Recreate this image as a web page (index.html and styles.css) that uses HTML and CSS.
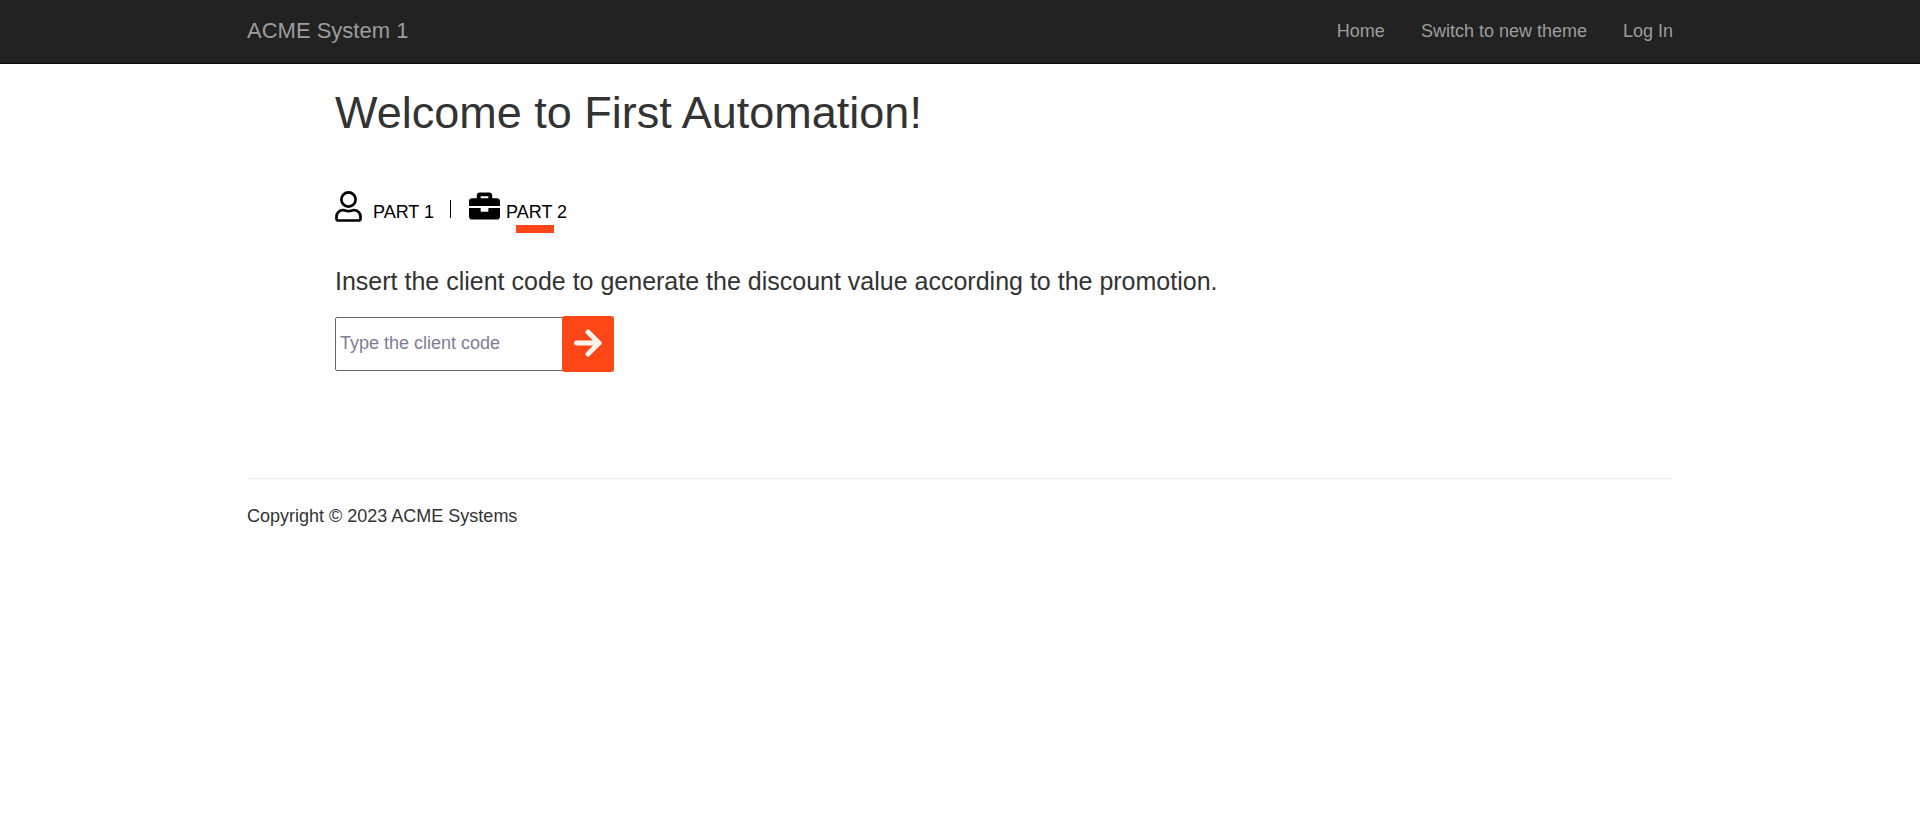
FILE: index.html
```html
<!DOCTYPE html>
<html lang="en">
<head>
<meta charset="utf-8">
<meta name="viewport" content="width=device-width, initial-scale=1">
<title>ACME System 1</title>
<link rel="stylesheet" href="styles.css">
</head>
<body>
<header class="navbar">
  <div class="container navbar-inner">
    <a class="brand" href="#">ACME System 1</a>
    <nav class="nav">
      <a href="#">Home</a>
      <a href="#">Switch to new theme</a>
      <a href="#">Log In</a>
    </nav>
  </div>
</header>
<div class="container">
  <main class="content">
    <h1 class="title">Welcome to First Automation!</h1>
    <nav class="parts">
      <a class="part part-one" href="#">
        <svg class="icon-user" viewBox="0 0 27 31" aria-hidden="true"><g fill="none" stroke="#000" stroke-width="2.700"><circle cx="13.500" cy="8.500" r="7.100"/><path d="M8.200 19.200C4.500 19.200 1.500 22 1.500 25.700V27.500C1.500 28.700 2.300 29.500 3.500 29.500H23.500C24.700 29.500 25.500 28.700 25.500 27.500V25.700C25.500 22 22.500 19.200 18.800 19.200C17.300 19.200 16.300 20.100 13.500 20.100S9.700 19.200 8.200 19.200Z"/></g></svg>
        <span class="label">PART 1</span>
      </a>
      <span class="divider"></span>
      <a class="part part-two" href="#">
        <svg class="icon-case" viewBox="0 0 512 512" aria-hidden="true"><path d="M320 336c0 8.840-7.160 16-16 16h-96c-8.840 0-16-7.160-16-16v-48H0v144c0 25.600 22.400 48 48 48h416c25.600 0 48-22.400 48-48V288H320v48zm144-208h-80V80c0-25.600-22.400-48-48-48H176c-25.600 0-48 22.400-48 48v48H48c-25.600 0-48 22.400-48 48v80h512v-80c0-25.600-22.400-48-48-48zm-144 0H192V96h128v32z"/></svg>
        <span class="label active">PART 2</span>
      </a>
    </nav>
    <form class="promo">
      <label class="promo-label" for="code">Insert the client code to generate the discount value according to the promotion.</label>
      <div class="field">
        <input class="code" id="code" type="text" placeholder="Type the client code">
        <button class="go" type="button" aria-label="Generate">
          <svg class="icon-arrow" viewBox="0 0 28 28" aria-hidden="true"><path d="M2.500 14H25M14 3L25 14L14 25" fill="none" stroke="#fff5ee" stroke-width="5" stroke-linecap="round" stroke-linejoin="round"/></svg>
        </button>
      </div>
    </form>
  </main>
  <footer class="footer">Copyright © 2023 ACME Systems</footer>
</div>
</body>
</html>
```
FILE: styles.css
```css
* { box-sizing: border-box; }
body {
  margin: 0;
  background: #fff;
  color: #333;
  font: 18px/24px "Liberation Sans", Arial, sans-serif;
}
a { color: inherit; text-decoration: none; }
.container {
  max-width: 1462px;
  margin: 0 auto;
  padding: 0 18px;
}
.navbar {
  background: #222;
  border-bottom: 1px solid #080808;
  color: #9d9d9d;
}
.navbar-inner {
  display: flex;
  align-items: center;
  justify-content: space-between;
  flex-wrap: wrap;
  min-height: 63px;
  padding-bottom: 2px;
}
.brand { font-size: 22px; }
.nav { display: flex; flex-wrap: wrap; gap: 36px; }
.content { padding: 24px 0 0 88px; }
.title {
  margin: 0;
  font-size: 45px;
  line-height: 50px;
  font-weight: 400;
}
.parts {
  display: flex;
  align-items: flex-start;
  margin-top: 52px;
  height: 44px;
  color: #000;
}
.part { display: flex; }
.part-one { gap: 11px; }
.part-two { gap: 6px; }
.icon-user { width: 27px; height: 31px; margin-top: 1px; }
.icon-case { width: 31px; height: 32px; }
.label { margin-top: 10px; }
.active {
  display: flex;
  flex-direction: column;
}
.active::after {
  content: "";
  width: 38px;
  height: 8px;
  margin: 1px 0 0 10px;
  background: #ff4617;
}
.divider {
  width: 1px;
  height: 18px;
  margin: 10px 18px 0 16px;
  background: #000;
}
.promo-label {
  display: block;
  margin-top: 31px;
  font-size: 25px;
  line-height: 32px;
}
.field {
  display: flex;
  align-items: center;
  margin-top: 19px;
}
.code {
  width: 228px;
  height: 54px;
  padding: 0 4px 2px;
  border: 1px solid #666;
  border-radius: 2px 0 0 2px;
  font: inherit;
  color: #333;
}
.code::placeholder { color: #7d7d98; opacity: 1; }
.go {
  display: flex;
  align-items: center;
  justify-content: center;
  width: 52px;
  height: 56px;
  margin-left: -1px;
  padding: 0 0 2px;
  border: 0;
  border-radius: 3px;
  background: #ff4617;
}
.icon-arrow { width: 28px; height: 28px; }
.footer {
  margin-top: 106px;
  padding-top: 25px;
  border-top: 1px solid #eee;
}
```
